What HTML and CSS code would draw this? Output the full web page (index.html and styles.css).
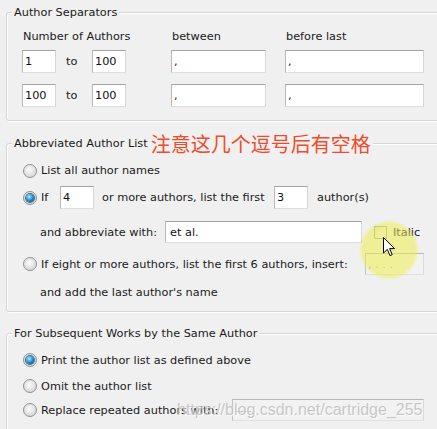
FILE: index.html
```html
<!DOCTYPE html>
<html lang="en">
<head>
    <meta charset="UTF-8">
    <title>Author Lists</title>
    <link rel="stylesheet" href="styles.css">
</head>
<body>
    <fieldset class="group sep">
        <legend>Author Separators</legend>
        <div class="body">
            <div class="sep-grid">
                <div class="head">Number of Authors</div>
                <div class="head">between</div>
                <div class="head">before last</div>

                <div class="range">
                    <input class="num" value="1"><span class="to">to</span><input class="num" value="100">
                </div>
                <input class="mid" value=",">
                <input class="last" value=",">

                <div class="range">
                    <input class="num" value="100"><span class="to">to</span><input class="num" value="100">
                </div>
                <input class="mid" value=",">
                <input class="last" value=",">
            </div>
        </div>
    </fieldset>

    <fieldset class="group abbr">
        <legend>Abbreviated Author List<span class="note">注意这几个逗号后有空格</span></legend>
        <div class="body">
            <div class="row r1">
                <span class="radio"></span><span class="lbl">List all author names</span>
            </div>
            <div class="row r2">
                <span class="radio on"></span><span class="lbl if">If</span>
                <input class="count" value="4">
                <span class="txt w-first">or more authors, list the first</span>
                <input class="count" value="3">
                <span class="txt">author(s)</span>
            </div>
            <div class="row r3">
                <span class="txt w-abbr">and abbreviate with:</span>
                <input class="etal" value="et al.">
                <span class="check"></span>
                <span class="txt">Italic</span>
            </div>
            <div class="row r4">
                <span class="radio"></span><span class="lbl w-insert">If eight or more authors, list the first 6 authors, insert:</span>
                <input class="insert" value=", . . ." disabled>
            </div>
            <div class="row r5">
                <span class="txt">and add the last author's name</span>
            </div>
        </div>
    </fieldset>

    <fieldset class="group subs">
        <legend>For Subsequent Works by the Same Author</legend>
        <div class="body">
            <div class="row s1">
                <span class="radio on"></span><span class="lbl">Print the author list as defined above</span>
            </div>
            <div class="row s2">
                <span class="radio"></span><span class="lbl">Omit the author list</span>
            </div>
            <div class="row s3">
                <span class="radio"></span><span class="lbl w-replace">Replace repeated authors with:</span>
                <input class="replace" value="----" disabled>
            </div>
        </div>
    </fieldset>

    <!-- screen recording overlays -->
    <div class="spot"></div>
    <svg class="cursor" width="13" height="20" viewBox="0 0 13 20">
        <path d="M0.5 0.5 L0.5 16 L4.3 12.4 L7 18.6 L9.2 17.6 L6.6 11.6 L11.5 11.6 Z" fill="#fff" stroke="#000" stroke-width="1"/>
    </svg>
    <div class="watermark">https://blog.csdn.net/cartridge_255</div>
</body>
</html>
```

FILE: styles.css
```css
* {
    box-sizing: border-box;
}

body {
    margin: 0;
    height: 429px;
    overflow: hidden;
    position: relative;
    background-color: #f0f0f0;
    color: #1a1a1a;
    font-family: "DejaVu Sans", Verdana, sans-serif;
    font-size: 11.3px;
}

.group {
    margin: 0 -20px 0 6px;
    padding: 0;
    min-width: 0;
    border: 1px solid #d3d6d8;
    border-radius: 3px;
    box-shadow: inset 1px 1px 0 #fff, 1px 1px 0 #fff;
}

.group legend {
    height: 15px;
    margin-left: 5px;
    padding: 0 2px;
    line-height: 15px;
    background-color: #f0f0f0;
}

.sep { margin-top: 5px; }
.abbr { margin-top: 15px; }
.subs { margin-top: 14px; }

input {
    font-family: inherit;
    font-size: inherit;
    color: #111;
    margin: 0;
    padding: 0 0 0 2px;
    border: 1px solid;
    border-color: #a3a3a3 #d6d6d6 #dedede #b8b8b8;
    background-color: #fff;
    outline: none;
}

input:disabled {
    background-color: #f2f2f2;
    border-color: #b8b8b8 #dadada #e0e0e0 #c4c4c4;
    color: #a8a8a8;
}

/* author separators */
.sep .body {
    padding: 10px 0 13px 15px;
}

.sep-grid {
    display: grid;
    grid-template-columns: 149px 114px 139px;
    grid-template-rows: 14px 29px 34px;
    align-items: end;
}

.head {
    line-height: 14px;
    padding-left: 1px;
}

.range {
    display: flex;
    align-items: center;
    height: 23px;
}

.num {
    width: 34px;
    height: 23px;
}

.to {
    width: 36px;
    padding-left: 10px;
}

.mid {
    width: 95px;
    height: 23px;
}

.last {
    width: 139px;
    height: 23px;
}

/* abbreviated list */
.abbr legend .note {
    display: inline-block;
    height: 15px;
    margin-left: 3px;
    vertical-align: top;
    font-family: "Noto Sans CJK SC", sans-serif;
    font-size: 20px;
    line-height: 15px;
    color: #f04b2b;
}

.abbr .body {
    padding: 8px 0 9px 16px;
}

.row {
    display: flex;
    align-items: center;
    white-space: nowrap;
}

.r1 { height: 23px; }
.r2 { height: 23px; margin-top: 4px; }
.r3 { height: 22px; margin-top: 12px; padding-left: 17px; }
.r4 { height: 22px; margin-top: 10px; }
.r5 { height: 20px; margin-top: 7px; padding-left: 17px; }

.radio {
    position: relative;
    flex: none;
    width: 14px;
    height: 14px;
    border-radius: 50%;
    border: 1px solid #8d9195;
    background: radial-gradient(circle at 45% 40%, #fbfbfb 0%, #e6e6e6 45%, #c9cbcd 100%);
}

.radio.on::after {
    content: "";
    position: absolute;
    left: 2px;
    top: 2px;
    width: 8px;
    height: 8px;
    border-radius: 50%;
    background: radial-gradient(circle at 40% 35%, #bfeaff 0%, #3aa3dc 40%, #0f5e95 75%, #0a3d66 100%);
    box-shadow: 0 0 0 1px #3d6d8e;
}

.lbl {
    margin-left: 4px;
}

.if { width: 19px; }

.count {
    width: 34px;
    height: 23px;
}

.w-first {
    width: 180px;
    padding-left: 8px;
}

.r2 .count + .txt + .count + .txt {
    margin-left: 9px;
}

.w-abbr { width: 125px; }

.etal {
    width: 197px;
    height: 22px;
    padding-left: 4px;
}

.check {
    flex: none;
    width: 13px;
    height: 13px;
    margin: 0 6px 0 12px;
    border: 1px solid #a8a8a8;
    background: linear-gradient(135deg, #e2e2e2, #fafafa);
}

.w-insert { width: 324px; }

.insert {
    width: 59px;
    height: 22px;
}

/* subsequent works */
.subs .body {
    padding: 8px 0 10px 16px;
}

.s1 { height: 22px; }
.s2 { height: 22px; margin-top: 4px; }
.s3 { height: 22px; margin-top: 2px; }

.w-replace { width: 191px; }

.replace {
    width: 192px;
    height: 22px;
}

/* overlays from the capture */
.spot {
    position: absolute;
    left: 359px;
    top: 220px;
    width: 60px;
    height: 60px;
    border-radius: 50%;
    background: radial-gradient(circle, rgba(238, 238, 70, 0.55) 0%, rgba(238, 238, 70, 0.5) 62%, rgba(238, 238, 70, 0) 72%);
}

.cursor {
    position: absolute;
    left: 383px;
    top: 237px;
}

.watermark {
    position: absolute;
    left: 177px;
    top: 402px;
    font-family: "Liberation Sans", Arial, sans-serif;
    font-size: 16px;
    line-height: 16px;
    color: rgba(190, 190, 190, 0.85);
    text-shadow: 1px 1px 0 rgba(255, 255, 255, 0.7);
    white-space: nowrap;
}
```
